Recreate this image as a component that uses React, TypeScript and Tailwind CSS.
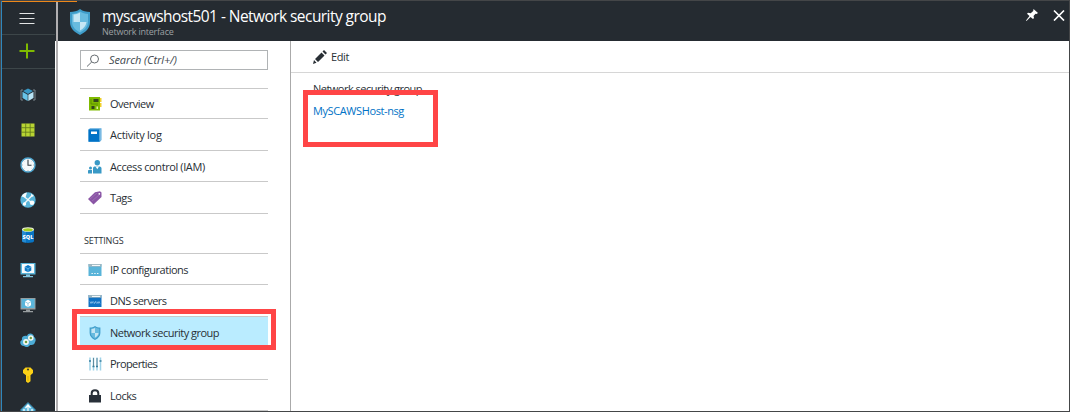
import type { ReactNode } from "react";

function Shield({ className }: { className: string }) {
  return (
    <svg className={className} viewBox="0 0 20 26">
      <path d="M10 0C7 2.3 4 3 0 3v10c0 6 4 10 10 13 6-3 10-7 10-13V3c-4 0-7-.7-10-3z" fill="#3f9dca" />
      <path d="M10 2.500C7.500 4 5 4.700 2 4.900V13c.2 5 3.500 8 8 10.600 4.500-2.600 7.800-5.600 8-10.600V4.900C15 4.700 12.500 4 10 2.500z" fill="#68bbdf" />
      <path d="M10 3.500C8 4.800 6 5.300 3.500 5.500V13H10z" fill="#c5e6f4" />
      <path d="M10 13h6.500c-.5 4-3 6.500-6.500 8.500z" fill="#c5e6f4" />
    </svg>
  );
}

const railIcons: { name: string; art: ReactNode }[] = [
  {
    name: "Resource groups",
    art: (
      <>
        <path d="M3 3H1v10h2M13 3h2v10h-2" fill="none" stroke="#7a858c" />
        <path d="M8 1.500l5 2.500L8 7 3 4z" fill="#3999c6" />
        <path d="M2.500 4.700L7.700 7.700V14L2.500 11z" fill="#68c4e8" />
        <path d="M13.500 4.700L8.300 7.700V14l5.200-3z" fill="#b8e4f5" />
      </>
    ),
  },
  {
    name: "All resources",
    art: (
      <>
        <path d="M1.500 1.500h13v13h-13z" fill="#b8d432" />
        <path d="M5.700 1v14M10.200 1v14M1 5.700h14M1 10.200h14" stroke="#60751c" strokeWidth=".8" />
      </>
    ),
  },
  {
    name: "Recent",
    art: (
      <>
        <circle cx="8" cy="8" r="7" fill="#f5f8f9" stroke="#4da5cf" strokeWidth="1.400" />
        <path d="M8 3v5.300h3.500" fill="none" stroke="#343d43" strokeWidth="1.100" />
        <path d="M8 1.700v1M8 13.300v1M1.700 8h1M13.300 8h1M3.500 3.500l.7.7M11.800 11.800l.7.7M3.500 12.500l.7-.7M12.500 3.500l-.7.7" stroke="#718087" strokeWidth=".7" />
      </>
    ),
  },
  {
    name: "App Services",
    art: (
      <>
        <circle cx="8" cy="8" r="7.700" fill="#56b3d8" />
        <path d="M4 4.500L12 11M4 12L12 3.500" fill="none" stroke="#ecf6fa" strokeWidth="1.400" />
        <path d="M1.500 4.500C2.500 2.300 4.500.8 7 .5L5.500 5.500z" fill="#f6fbfd" />
        <circle cx="12" cy="10.800" r="2.300" fill="#fff" />
        <path d="M11 1.500l3 2.500-2.500 1z" fill="#fff" />
        <circle cx="4.500" cy="12" r="1.700" fill="#fff" />
      </>
    ),
  },
  {
    name: "SQL databases",
    art: (
      <>
        <path d="M2 3h12v11c0 2.500-12 2.500-12 0z" fill="#0874c4" />
        <path d="M2 3h4v12.500c-2-.2-4-.7-4-1.500z" fill="#258bd2" />
        <ellipse cx="8" cy="2.500" rx="6" ry="2.300" fill="#eef5df" />
        <ellipse cx="8" cy="2.700" rx="4.800" ry="1.500" fill="#a2cc22" />
        <text x="8" y="11.500" textAnchor="middle" fontFamily="Open Sans" fontSize="5.500" fontWeight="800" fill="#fff">SQL</text>
      </>
    ),
  },
  {
    name: "Virtual machines",
    art: (
      <>
        <path d="M.5 1h15v11.500H.5z" fill="#59b4d9" />
        <path d="M2 2h12v9H2z" fill="#f7fbfd" />
        <path d="M8 3l3.300 1.700v3.800L8 10.300 4.700 8.500V4.700z" fill="#0b78c5" />
        <path d="M5 5l3 1.700L11 5M8 6.700v3.500" stroke="#9bd4ee" strokeWidth=".6" fill="none" />
        <path d="M6 12.500h4V14H6zM3 14h10v1.200H3z" fill="#7fc4df" />
      </>
    ),
  },
  {
    name: "Virtual machines (classic)",
    art: (
      <>
        <path d="M.5 1h15v11.500H.5z" fill="#949d9f" />
        <path d="M1.500 2h13v9h-13z" fill="#5ab5da" />
        <path d="M8 2.800l3 1.700v3.800L8 10.200 5 8.300V4.500z" fill="#fff" />
        <path d="M5 4.700l3 1.700 3-1.700M8 6.400v3.500" stroke="#56afd3" strokeWidth=".6" fill="none" />
        <path d="M6 12.500h4V14H6zM3 14h10v1.200H3z" fill="#989d9f" />
      </>
    ),
  },
  {
    name: "Cloud services",
    art: (
      <>
        <path d="M4 14C0 14-1 9 2 8 1 4 5 3 7 4c1-4 7-3 7 1 2 1 2 4 1 5-.5 3-3 3-5 3-1 2-4 3-6 1z" fill="#4dacd6" />
        <circle cx="6" cy="10" r="2.100" fill="#6f9e3f" stroke="#f3f8f4" strokeWidth="1.600" />
        <circle cx="10.800" cy="6" r="2" fill="#6f9e3f" stroke="#f3f8f4" strokeWidth="1.600" />
      </>
    ),
  },
  {
    name: "Subscriptions",
    art: (
      <>
        <path d="M5.500.5h5L13 3v3l-2.500 2.300v6L8 16l-2-1.500V8.300L3 6V3z" fill="#fcd116" />
        <circle cx="8" cy="2.500" r="1.100" fill="#44432e" />
        <path d="M8 9v5" stroke="#d8a800" />
      </>
    ),
  },
  {
    name: "Virtual networks",
    art: (
      <>
        <path d="M8 .5L15.500 8 8 15.500.5 8z" fill="#5eb8dc" stroke="#347fa2" />
        <path d="M8 3v9M5.500 6L8 3l2.500 3M4 7v3M12 7v3" fill="none" stroke="#fff" strokeWidth="1.200" />
      </>
    ),
  },
];

const overviewArt = (
  <>
    <path d="M1 0h11v13.500H1z" fill="#7fba00" />
    <path d="M12 1h1.500v4H12zM12 6h1.500v4H12z" fill="#f0d02d" />
    <path d="M5.500 2h5v3h-5zM3.500 9h3v3h-3z" fill="#34461d" />
    <path d="M3 2v5h5M9 6v3" fill="none" stroke="#578900" strokeWidth=".8" />
    <path d="M8.500 9.500H10V12H8.500z" fill="#dcefa5" />
  </>
);

const activityArt = (
  <>
    <path d="M.5 1.500L2 .3h11.500V12L12 13.700H.5z" fill="#5aa9dc" />
    <path d="M.5 1.500h11v12.200H.5z" fill="#0072c6" />
    <path d="M3 3.500h6V6H3z" fill="#fff" />
    <path d="M12 1.500v11" stroke="#c9e4f4" strokeWidth=".6" />
  </>
);

const accessArt = (
  <>
    <circle cx="9.300" cy="2.800" r="2.700" fill="#3999c6" />
    <path d="M5 13.500V8.500c0-1.500 1-2 2-2h4.500c1.500 0 2 1 2 2v5z" fill="#3999c6" />
    <path d="M7.500 6.500l1.800 2.700 1.700-2.700z" fill="#fff" />
    <circle cx="2.500" cy="8" r="1.500" fill="#3999c6" />
    <path d="M0 13.500V11c0-1 .5-1 1-1h3v3.500z" fill="#3999c6" />
  </>
);

const tagArt = (
  <>
    <path d="M7 1.200L12 .2l1.500 1.300V6L5.500 13.500 0 8z" fill="#8a55a5" />
    <path d="M2 8L9 2M4 10l7-6" stroke="#a77cbb" strokeWidth=".6" />
    <circle cx="11.300" cy="2.800" r=".9" fill="#fff" />
  </>
);

const ipArt = (
  <>
    <path d="M.5 1h13v12H.5z" fill="#59b4d9" />
    <path d="M.5 1h13v2.700H.5z" fill="#9eb7c1" />
    <path d="M4 2.400h8" stroke="#fff" />
    <path d="M3.500 10.500h1.300M6.300 10.500h1.300M9.100 10.500h1.300" stroke="#fff" strokeWidth="1.200" />
  </>
);

const dnsArt = (
  <>
    <path d="M.5 1h13v12H.5z" fill="#1272c3" />
    <path d="M.5 1h13v2.700H.5z" fill="#9eb7c1" />
    <path d="M4 2.400h8" stroke="#fff" />
    <path d="M2 7.500l1 2 1-2 1 2M5.500 7.500l1 2 1-2 1 2M9 7.500l1 2 1-2 1 2" fill="none" stroke="#a4cef0" strokeWidth=".7" />
  </>
);

const propertiesArt = (
  <>
    <path d="M2 .5v13M5.500.500v13M9 .5v13M12.500.500v13" stroke="#9ed2e8" strokeWidth="1.500" />
    <path d="M1 4h2M11.500 4h2M4.500 9.500h2M8 9.500h2" stroke="#397f9e" strokeWidth="1.600" />
    <path d="M5.500 1v8M9 1v8" stroke="#507a8c" strokeWidth=".8" />
  </>
);

const lockArt = (
  <>
    <path d="M1 6h12v7.500H1z" fill="#293039" />
    <path d="M3.700 6V4.300c0-4.200 6.600-4.200 6.600 0V6" fill="none" stroke="#293039" strokeWidth="2" />
  </>
);

function MenuIcon({ children }: { children: ReactNode }) {
  return <svg className="ml-2 h-3.5 w-3.5 shrink-0" viewBox="0 0 14 14">{children}</svg>;
}

function MenuRow({ label, icon, size, track = "tracking-[-0.48px]", active = false }: {
  label: string; icon: ReactNode; size: string; track?: string; active?: boolean;
}) {
  return (
    <div className={`flex items-center border-b border-[#c9c9c9] pt-px ${size} ${active ? "bg-[#baecff]" : ""}`}>
      {icon}
      <span className={`ml-2 whitespace-nowrap ${track}`}>{label}</span>
    </div>
  );
}

function Rail() {
  return (
    <nav className="flex h-full w-[54px] shrink-0 flex-col items-center border-l border-[#2f87bd] bg-[#252b31]">
      <div className="flex h-[34px] w-full shrink-0 items-center justify-center border-b border-[#3d4649] pr-[3px]">
        <svg className="h-3 w-4" viewBox="0 0 16 12"><path d="M.5 1.500h15M.5 6.500h15M.5 11.500h15" stroke="#e3e5e6" /></svg>
      </div>
      <div className="flex h-[34px] w-full shrink-0 items-center justify-center border-b border-[#3d4649] pr-[3px] pb-0.5">
        <svg className="h-4 w-4" viewBox="0 0 16 16"><path d="M.5 8h15M8 .5v15" stroke="#7fba00" strokeWidth="2" /></svg>
      </div>
      <div className="flex flex-col gap-[19px] pt-[18px] pr-px">
        {railIcons.map(({ name, art }) => (
          <svg key={name} aria-label={name} className="h-4 w-4 shrink-0" viewBox="0 0 16 16">{art}</svg>
        ))}
      </div>
    </nav>
  );
}

function Menu() {
  return (
    <aside className="w-[233px] shrink-0 border-r border-[#aaa] pt-[9px] pl-[22px] text-[11px] leading-4">
      <div className="flex h-5 w-[188px] items-center border border-[#b0b3b5] pl-[5px]">
        <svg className="h-[13px] w-[14px]" viewBox="0 0 14 13">
          <circle cx="8.500" cy="5" r="4" fill="none" stroke="#656b70" />
          <path d="M5.700 8L1 12.500" stroke="#656b70" />
        </svg>
        <span className="ml-[9px] whitespace-nowrap italic tracking-[-0.1px] text-[#41474d]">Search (Ctrl+/)</span>
      </div>
      <div className="mt-[18px] w-[188px] border-t border-[#c9c9c9]">
        <MenuRow label="Overview" size="h-[30px]" icon={<MenuIcon>{overviewArt}</MenuIcon>} />
        <MenuRow label="Activity log" size="h-8" track="tracking-[-0.27px]" icon={<MenuIcon>{activityArt}</MenuIcon>} />
        <MenuRow label="Access control (IAM)" size="h-[31px]" track="tracking-[-0.4px]" icon={<MenuIcon>{accessArt}</MenuIcon>} />
        <MenuRow label="Tags" size="h-8" track="tracking-[-0.4px]" icon={<MenuIcon>{tagArt}</MenuIcon>} />
      </div>
      <div className="flex h-10 w-[188px] items-end border-b border-[#c9c9c9] pb-1 pl-1 text-[9px] tracking-[-0.15px]">SETTINGS</div>
      <div className="w-[188px]">
        <MenuRow label="IP configurations" size="h-[31px]" icon={<MenuIcon>{ipArt}</MenuIcon>} />
        <MenuRow label="DNS servers" size="h-8" track="tracking-[-0.55px]" icon={<MenuIcon>{dnsArt}</MenuIcon>} />
        <MenuRow active label="Network security group" size="h-[31px]" track="tracking-[-0.51px]" icon={<Shield className="ml-2 h-3.5 w-3.5" />} />
        <MenuRow label="Properties" size="h-8" track="tracking-[-0.6px]" icon={<MenuIcon>{propertiesArt}</MenuIcon>} />
        <MenuRow label="Locks" size="h-[31px]" icon={<MenuIcon>{lockArt}</MenuIcon>} />
      </div>
    </aside>
  );
}

export default function App() {
  return (
    <div className="relative flex h-[412px] w-[1070px] overflow-hidden border border-[#444648] bg-white font-['Open_Sans',sans-serif] text-[#292f35]">
      <Rail />
      <div className="w-px shrink-0 bg-white"><div className="h-10 bg-[#252b31]" /></div>
      <div className="w-0.5 shrink-0 bg-[#b1afb1]" />
      <div className="flex min-w-0 flex-1 flex-col">
        <header className="flex h-10 shrink-0 bg-[#252b31] text-white">
          <Shield className="mt-2 ml-3 h-[26px] w-5" />
          <div className="ml-3 pt-[5px]">
            <h1 className="whitespace-nowrap text-[15.5px] leading-5 tracking-[-0.56px]">myscawshost501 - Network security group</h1>
            <p className="whitespace-nowrap text-[9px] leading-[11px] tracking-[-0.22px] text-[#9ca0a3]">Network interface</p>
          </div>
          <div className="mr-1 ml-auto flex gap-[15px] pt-2">
            <svg className="h-3 w-3" viewBox="0 0 12 12"><path d="M7.500 0L12 4l-1.500 1-1-.3L7.500 7l.5 2-1 1-2.500-2L.5 12 0 11.500 3.500 7 1 4.700l1-1 2.700.5L7.200 2z" fill="#fff" /></svg>
            <svg className="h-3 w-3" viewBox="0 0 12 12"><path d="M1 1.500l10 10M11 1.500L1 11.500" stroke="#fff" strokeWidth="1.700" /></svg>
          </div>
        </header>
        <div className="flex min-h-0 flex-1">
          <Menu />
          <main className="min-w-0 flex-1 text-[11px] leading-4">
            <div className="flex h-8 items-center border-b border-[#d6d6d6] pl-[22px]">
              <svg className="h-3.5 w-3.5" viewBox="0 0 14 14"><path d="M0 14l1-4 2.500 2.800zM2 9L8.500 2.500l3 3L5 12zM9.500 1.500L11 0l3 3-1.500 1.500z" fill="#292f35" /></svg>
              <span className="ml-1 tracking-[-0.4px]">Edit</span>
            </div>
            <div className="pt-2 pl-[22px]">
              <p className="tracking-[-0.51px]">Network security group</p>
              <p className="mt-1.5 tracking-[-0.4px] text-[#0072c6]">MySCAWSHost-nsg</p>
            </div>
          </main>
        </div>
      </div>
      <div className="absolute top-0 left-px h-px w-[75px] bg-[#ed881a]" />
      <div className="absolute top-[308px] left-[71px] h-[41px] w-[204px] border-[5px] border-[#ff4546]" />
      <div className="absolute top-[89px] left-[302px] h-[57px] w-[135px] border-[5px] border-[#ff4546]" />
    </div>
  );
}
